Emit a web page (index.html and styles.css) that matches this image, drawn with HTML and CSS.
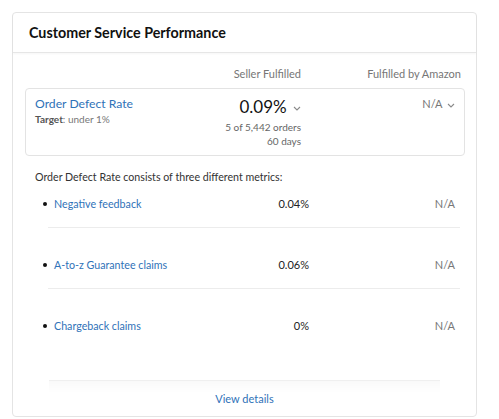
FILE: index.html
```html
<!DOCTYPE html>
<html>
<head>
<meta charset="utf-8">
<link rel="stylesheet" href="styles.css">
</head>
<body>
<div class="card">
  <div class="card-header"><h2 class="title">Customer Service Performance</h2></div>
  <div class="card-body">
    <div class="col-heads">
      <span class="col-head">Seller Fulfilled</span>
      <span class="col-head">Fulfilled by Amazon</span>
    </div>
    <div class="odr-box">
      <div class="odr-left">
        <a class="link odr-title">Order Defect Rate</a>
        <div class="target"><b>Target</b>: under 1%</div>
      </div>
      <div class="odr-mid">
        <div class="odr-value">0.09% <svg class="chev" viewBox="0 0 8 5" width="8" height="5"><path d="M1 1 L4 4 L7 1" fill="none" stroke="#8a8a8a" stroke-width="1.1"/></svg></div>
        <div class="sub">5 of 5,442 orders</div>
        <div class="sub">60 days</div>
      </div>
      <div class="odr-right">N/A <svg class="chev" viewBox="0 0 8 5" width="8" height="5"><path d="M1 1 L4 4 L7 1" fill="none" stroke="#8a8a8a" stroke-width="1.1"/></svg></div>
    </div>
    <p class="intro">Order Defect Rate consists of three different metrics:</p>
    <div class="metrics">
      <div class="metric">
        <span class="dot"></span>
        <a class="link metric-name">Negative feedback</a>
        <span class="metric-val">0.04%</span>
        <span class="metric-na">N/A</span>
      </div>
      <div class="divider"></div>
      <div class="metric">
        <span class="dot"></span>
        <a class="link metric-name">A-to-z Guarantee claims</a>
        <span class="metric-val">0.06%</span>
        <span class="metric-na">N/A</span>
      </div>
      <div class="divider"></div>
      <div class="metric">
        <span class="dot"></span>
        <a class="link metric-name">Chargeback claims</a>
        <span class="metric-val">0%</span>
        <span class="metric-na">N/A</span>
      </div>
    </div>
  </div>
  <div class="card-footer"><a class="link">View details</a></div>
</div>
</body>
</html>
```
FILE: styles.css
```css
body {
  margin: 0;
  background: #fff;
  font-family: Lato, "Open Sans", sans-serif;
  color: #222;
}
.card {
  margin: 12px 0 0 12px;
  width: 465px;
  height: 405px;
  box-sizing: border-box;
  border: 1px solid #e4e4e4;
  border-radius: 4px;
  display: flex;
  flex-direction: column;
}
.card-header {
  height: 39px;
  padding-left: 16px;
  display: flex;
  align-items: center;
  border-bottom: 1px solid #e6e6e6;
  box-shadow: 0 1px 2px rgba(0,0,0,0.04);
}
.title {
  margin: 0;
  font-size: 14.3px;
  font-weight: 700;
  color: #111;
}
.card-body {
  flex: 1;
  padding: 0 11px 0 12px;
}
.col-heads {
  margin-top: 14px;
  display: grid;
  grid-template-columns: 1fr 160px;
  padding-right: 4px;
  line-height: 14px;
  font-size: 11px;
  color: #767676;
}
.col-head { text-align: right; }
.odr-box {
  margin-top: 7px;
  border: 1px solid #e3e3e3;
  border-radius: 4px;
  padding: 7px 9px 7px 9px;
  display: grid;
  grid-template-columns: 1fr auto 154px;
  align-items: start;
}
.link {
  color: #2f72b8;
  text-decoration: none;
}
.odr-title {
  display: block;
  font-size: 12.2px;
  line-height: 16px;
}
.target {
  margin-top: 0;
  font-size: 10px;
  line-height: 14px;
  color: #777;
}
.target b { color: #555; }
.odr-mid { text-align: right; }
.odr-value {
  font-size: 17px;
  line-height: 22px;
  color: #111;
}
.chev { vertical-align: middle; margin-left: 2px; }
.sub {
  font-size: 10px;
  line-height: 14px;
  color: #666;
}
.odr-value + .sub { margin-top: 2px; }
.odr-right {
  text-align: right;
  font-size: 11px;
  line-height: 16px;
  color: #767676;
}
.intro {
  margin: 13px 0 0 10px;
  font-size: 10.65px;
  line-height: 16px;
  color: #333;
}
.metrics {
  margin: 11px 5px 0 16px;
}
.metric {
  display: grid;
  grid-template-columns: 13px 1fr 60px 146px;
  align-items: center;
  padding-right: 5px;
  font-size: 11px;
  line-height: 16px;
}
.metric-name { font-size: 10.7px; }
.dot {
  width: 4px;
  height: 4px;
  border-radius: 50%;
  background: #111;
  margin-left: 2px;
}
.metric-val { text-align: right; color: #222; }
.metric-na { text-align: right; color: #777; }
.divider {
  margin: 15px 0 29px 7px;
  border-top: 1px solid #ececec;
}
.card-footer {
  margin: 0 36px;
  height: 35px;
  display: flex;
  align-items: center;
  justify-content: center;
  border-top: 1px solid #efefef;
  background: linear-gradient(to bottom, rgba(0,0,0,0.022), rgba(0,0,0,0) 12px);
  font-size: 11px;
}
```
